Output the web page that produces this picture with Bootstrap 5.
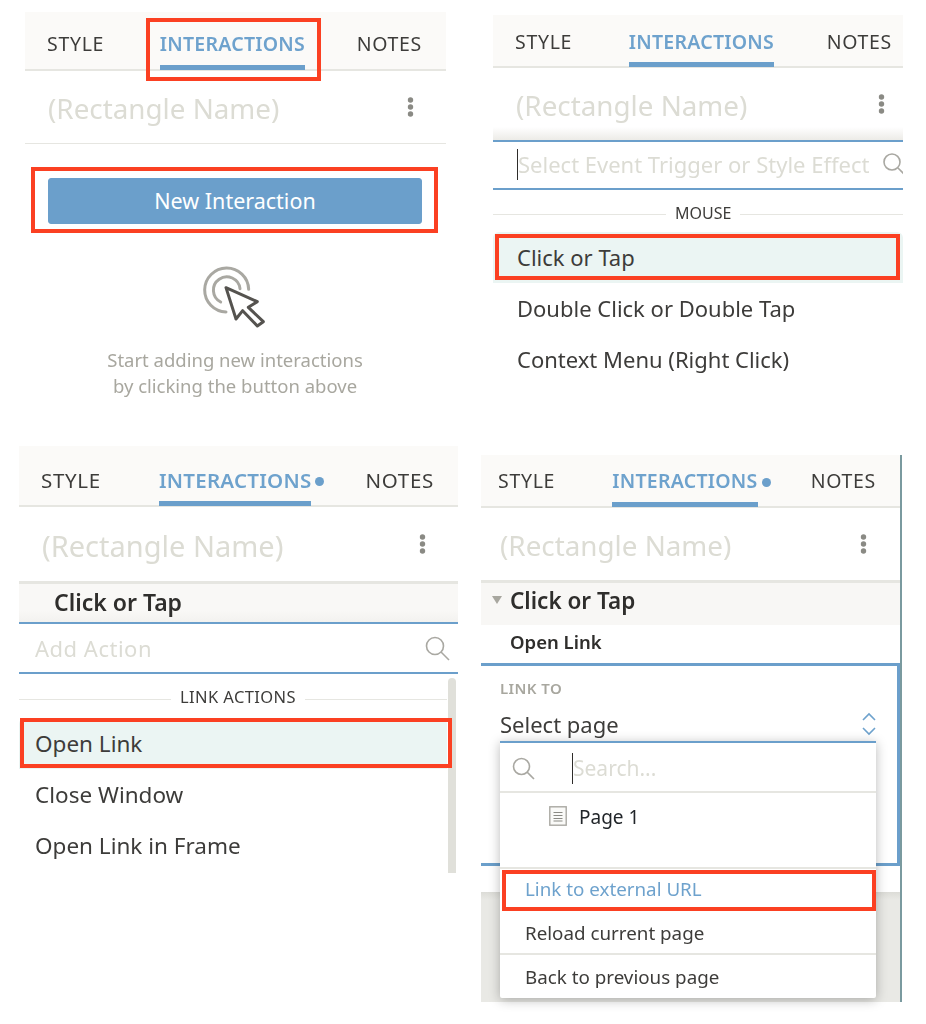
<!DOCTYPE html>
<html lang="en">
<head>
    <meta charset="UTF-8">
    <meta name="viewport" content="width=device-width, initial-scale=1, shrink-to-fit=no">
    <title>Interactions panel steps</title>
    <link href="https://cdn.jsdelivr.net/npm/bootstrap@5.3.0/dist/css/bootstrap.min.css" rel="stylesheet">
    <style>
        :root {
            --accent: #6b9fcb;
            --flag-red: #fb4022;
            --ink: #3d3c3a;
            --faint: #dcdcd4;
            --muted: #a8a79f;
            --hairline: #e6e6e1;
        }

        body {
            background: #fff;
            margin: 0;
            color: var(--ink);
            font-family: "Noto Sans", "Open Sans", sans-serif;
        }

        /* the source is a slightly soft photo of the app */
        .collage {
            display: grid;
            grid-template-columns: 463px 463px;
            grid-template-rows: 430px 594px;
            filter: blur(.35px);
        }

        .panel-a { margin: 12px 0 0 25px; width: 421px; }
        .panel-b { margin: 15px 0 0 30px; width: 410px; }
        .panel-c { margin: 16px 0 0 19px; width: 439px; height: 427px; }
        .panel-d { margin: 25px 0 0 18px; width: 421px; height: 547px; border-right: 2px solid #7a9a9f; position: relative; }

        /* tabs */
        .tab-strip {
            background: #fbfaf8;
            border-bottom: 2px solid var(--hairline);
            justify-content: space-between;
            flex-wrap: nowrap;
            align-items: flex-end;
        }
        .panel-a .tab-strip { height: 59px; padding: 0 24px 0 22px; }
        .panel-b .tab-strip { height: 53px; padding: 0 11px 0 22px; }
        .panel-c .tab-strip { height: 61px; padding: 0 24px 0 22px; }
        .panel-d .tab-strip { height: 53px; padding: 0 24px 0 17px; }

        .tab-strip .nav-link {
            padding: 0 0 9px;
            color: var(--ink);
            font-size: 19.5px;
            line-height: 24px;
            border-bottom: 5px solid transparent;
            margin-bottom: -1px;
            letter-spacing: .7px;
            position: relative;
        }
        .panel-b .tab-strip .nav-link { padding-bottom: 8px; }
        .panel-c .tab-strip .nav-link { font-size: 20.5px; }
        .tab-strip .nav-link.active {
            color: #6ea2cd;
            font-weight: 600;
            letter-spacing: .25px;
            border-bottom-color: var(--accent);
            margin-left: 4px;
        }
        .tab-dot {
            position: absolute;
            right: -13px;
            top: 9px;
            width: 9px;
            height: 9px;
            border-radius: 50%;
            background: var(--accent);
        }

        /* name row */
        .name-row {
            height: 72px;
            padding-left: 23px;
            padding-right: 32px;
            font-size: 27.8px;
            color: var(--faint);
        }
        .panel-a .name-row { height: 73px; border-bottom: 1px solid var(--hairline); padding-top: 4px; }
        .panel-b .name-row { background: linear-gradient(#fff 82%, #ecebe7); padding-right: 18px; padding-top: 4px; }
        .panel-c .name-row { height: 74px; padding-right: 32px; padding-top: 4px; font-size: 29px; }
        .panel-d .name-row { padding-right: 33px; padding-left: 19px; padding-top: 4px; }
        .more-dots { display: block; flex: none; margin-top: -5px; }

        /* new interaction */
        .cta-wrap { padding: 34px 24px 0 23px; }
        .cta-btn {
            height: 46px;
            background: var(--accent);
            border-color: var(--accent);
            color: #fff;
            font-size: 21.5px;
            line-height: 1;
            border-radius: 3px;
        }
        .cta-icon { display: block; margin: 26px auto 0; }
        .empty-note {
            margin-top: 7px;
            color: var(--muted);
            font-size: 18.5px;
            line-height: 26px;
            text-align: center;
        }

        /* search rows */
        .find-row {
            height: 50px;
            font-size: 22px;
            color: var(--faint);
            border-top: 2px solid var(--accent);
            border-bottom: 2px solid var(--accent);
            overflow: hidden;
            padding-bottom: 2px;
        }
        .panel-b .find-row { padding-left: 24px; }
        .panel-c .find-row { border-top: 0; padding: 0 8px 0 16px; letter-spacing: .5px; }
        .text-caret {
            display: block;
            flex: none;
            width: 1px;
            height: 31px;
            background: #2e2c2a;
        }
        .glass { display: block; flex: none; }
        .panel-b .glass { margin-right: -3px; }

        /* section label */
        .sect-label {
            font-size: 16px;
            height: 42px;
            gap: 9px;
            line-height: 1;
            padding-top: 3px;
        }
        .panel-c .sect-label { height: 44px; font-size: 16.5px; letter-spacing: .4px; padding-top: 2px; }
        .sect-label::before,
        .sect-label::after {
            content: "";
            flex: 1;
            height: 1px;
            margin-top: 4px;
            background: var(--hairline);
        }
        .panel-b .sect-label::before { flex: 0 0 173px; }
        .panel-c .sect-label::before { flex: 0 0 152px; }

        /* option rows */
        .pick-list .list-group-item {
            height: 51px;
            padding: 0 0 0 24px;
            border: 0;
            display: flex;
            align-items: center;
            font-size: 22px;
            color: var(--ink);
            background: transparent;
            position: relative;
        }
        .panel-c .pick-list .list-group-item { padding-left: 16px; font-size: 22.5px; }
        .pick-list .list-group-item.picked { background: #ebf5f3; }
        .scroll-thumb {
            flex: none;
            width: 8px;
            height: 195px;
            margin: 4px 2px 0 1px;
            background: #e0e0da;
            border-radius: 4px 4px 0 0;
        }
        .list-col { width: 428px; flex: none; }

        /* red callouts */
        .flag { position: relative; }
        .flag::after {
            content: "";
            position: absolute;
            border: 4px solid var(--flag-red);
            pointer-events: none;
            z-index: 5;
        }
        .flag-tab::after { top: -14px; left: -14px; right: -16px; bottom: -16px; }
        .flag-cta::after { top: -12px; left: -18px; right: -17px; bottom: -10px; }
        .flag-row::after { top: 2px; left: 2px; right: 3px; bottom: 3px; }
        .flag-row-c::after { top: 0; left: 1px; right: -5px; bottom: 1px; }
        .flag-ext::after { top: 1px; left: 2px; right: 0; bottom: 0; }

        /* trigger band */
        .trigger-band {
            height: 43px;
            border-top: 3px solid var(--hairline);
            background: linear-gradient(#f9f8f6 70%, #f3f2ef);
            font-size: 23px;
            font-weight: 600;
            color: #2f2e2c;
            padding-left: 35px;
            padding-bottom: 2px;
            border-bottom: 2px solid var(--accent);
        }
        .panel-d .trigger-band {
            height: 45px;
            background: #f8f7f5;
            border-bottom: 0;
            padding-left: 11px;
            gap: 8px;
            padding-bottom: 6px;
            font-size: 22.5px;
        }
        .fold-mark {
            width: 0;
            height: 0;
            border-left: 5px solid transparent;
            border-right: 5px solid transparent;
            border-top: 8px solid var(--muted);
            margin-top: -2px;
        }
        .action-row {
            height: 38px;
            padding-left: 29px;
            padding-bottom: 4px;
            font-size: 18.5px;
            font-weight: 600;
            color: #2f2e2c;
        }

        /* expanded action */
        .action-box {
            height: 203px;
            border-top: 3px solid var(--accent);
            border-right: 3px solid var(--accent);
            border-bottom: 3px solid var(--accent);
            padding: 13px 0 0 19px;
        }
        .field-label {
            font-size: 15px;
            font-weight: 600;
            color: var(--muted);
            line-height: 18px;
            letter-spacing: .4px;
        }
        .field-value {
            height: 40px;
            padding: 0 18px 0 0;
            font-size: 22px;
            margin-top: 7px;
            margin-right: 3px;
        }
        .foot-white { height: 26px; }
        .foot-gray {
            height: 110px;
            background: linear-gradient(#dcdcd7, #e9e9e5 8px);
        }

        /* page dropdown */
        .page-menu {
            position: absolute;
            left: 19px;
            top: 286px;
            width: 376px;
            height: 257px;
            padding: 0;
            margin: 0;
            border: 0;
            border-top: 2px solid var(--accent);
            border-radius: 0 0 2px 2px;
            background: #fff;
            box-shadow: 0 2px 12px rgba(0, 0, 0, .28);
            z-index: 3;
        }
        .menu-find {
            height: 50px;
            padding: 3px 0 0 12px;
            gap: 37px;
            font-size: 21px;
            color: var(--faint);
            border-bottom: 2px solid var(--hairline);
        }
        .menu-page {
            height: 74px;
            padding: 9px 0 0 49px;
            gap: 12px;
            font-size: 19px;
            align-items: flex-start;
            line-height: 30px;
        }
        .page-glyph { margin-top: 4px; }
        .page-menu .dropdown-item {
            height: 44px;
            padding: 0 0 0 25px;
            display: flex;
            align-items: center;
            font-size: 18.8px;
            color: var(--ink);
        }
        .page-menu .dropdown-item.first-ext {
            color: #6ea2cd;
            border-top: 2px solid var(--hairline);
            padding-bottom: 2px;
        }
        .page-menu .dropdown-item.split { border-bottom: 2px solid var(--hairline); padding-top: 2px; }
    </style>
</head>
<body>
    <div class="collage">

        <!-- step 1 -->
        <section class="panel-a">
            <nav class="nav tab-strip">
                <a class="nav-link" href="#">STYLE</a>
                <a class="nav-link active flag flag-tab" href="#">INTERACTIONS</a>
                <a class="nav-link" href="#">NOTES</a>
            </nav>
            <div class="name-row d-flex align-items-center justify-content-between">
                <span>(Rectangle Name)</span>
                <svg class="more-dots" width="7" height="20" viewBox="0 0 7 20"><g fill="#8a8a84"><circle cx="3.5" cy="3" r="2.7"/><circle cx="3.5" cy="10" r="2.7"/><circle cx="3.5" cy="17" r="2.7"/></g></svg>
            </div>
            <div class="cta-wrap">
                <button type="button" class="btn cta-btn w-100 flag flag-cta">New Interaction</button>
                <svg class="cta-icon" width="110" height="90" viewBox="0 0 330 270">
                    <g fill="none" stroke-linecap="round">
                        <path d="M206 118A66 66 0 1 0 138 186" stroke="#a9a8a2" stroke-width="9"/>
                        <path d="M180 116A40 40 0 1 0 122 156" stroke="#a9a8a2" stroke-width="9"/>
                    </g>
                    <path d="M138 113L232 155L205 172L250 215L232 228L188 182L168 207Z" fill="#fff" stroke="#55534f" stroke-width="9" stroke-linejoin="round"/>
                </svg>
                <p class="empty-note">Start adding new interactions<br>by clicking the button above</p>
            </div>
        </section>

        <!-- step 2 -->
        <section class="panel-b">
            <nav class="nav tab-strip">
                <a class="nav-link" href="#">STYLE</a>
                <a class="nav-link active" href="#">INTERACTIONS</a>
                <a class="nav-link" href="#">NOTES</a>
            </nav>
            <div class="name-row d-flex align-items-center justify-content-between">
                <span>(Rectangle Name)</span>
                <svg class="more-dots" width="7" height="20" viewBox="0 0 7 20"><g fill="#8a8a84"><circle cx="3.5" cy="3" r="2.7"/><circle cx="3.5" cy="10" r="2.7"/><circle cx="3.5" cy="17" r="2.7"/></g></svg>
            </div>
            <div class="find-row d-flex align-items-center justify-content-between">
                <span class="d-flex align-items-center text-nowrap"><i class="text-caret"></i>Select Event Trigger or Style Effect</span>
                <svg class="glass" width="24" height="24" viewBox="0 0 24 24"><g fill="none" stroke="#a9a8a2" stroke-width="1.6"><circle cx="10" cy="10" r="8"/><path d="M16 16l7 7"/></g></svg>
            </div>
            <div class="sect-label d-flex align-items-center">MOUSE</div>
            <div class="list-group pick-list">
                <a href="#" class="list-group-item picked flag flag-row">Click or Tap</a>
                <a href="#" class="list-group-item">Double Click or Double Tap</a>
                <a href="#" class="list-group-item">Context Menu (Right Click)</a>
            </div>
        </section>

        <!-- step 3 -->
        <section class="panel-c">
            <nav class="nav tab-strip">
                <a class="nav-link" href="#">STYLE</a>
                <a class="nav-link active" href="#">INTERACTIONS<i class="tab-dot"></i></a>
                <a class="nav-link" href="#">NOTES</a>
            </nav>
            <div class="name-row d-flex align-items-center justify-content-between">
                <span>(Rectangle Name)</span>
                <svg class="more-dots" width="7" height="20" viewBox="0 0 7 20"><g fill="#8a8a84"><circle cx="3.5" cy="3" r="2.7"/><circle cx="3.5" cy="10" r="2.7"/><circle cx="3.5" cy="17" r="2.7"/></g></svg>
            </div>
            <div class="trigger-band d-flex align-items-center">Click or Tap</div>
            <div class="find-row d-flex align-items-center justify-content-between">
                <span>Add Action</span>
                <svg class="glass" width="25" height="25" viewBox="0 0 25 25"><g fill="none" stroke="#a9a8a2" stroke-width="1.6"><circle cx="10" cy="10" r="8.5"/><path d="M16 16l8 8"/></g></svg>
            </div>
            <div class="d-flex">
                <div class="list-col">
                    <div class="sect-label d-flex align-items-center">LINK ACTIONS</div>
                    <div class="list-group pick-list">
                        <a href="#" class="list-group-item picked flag flag-row-c">Open Link</a>
                        <a href="#" class="list-group-item">Close Window</a>
                        <a href="#" class="list-group-item">Open Link in Frame</a>
                    </div>
                </div>
                <div class="scroll-thumb"></div>
            </div>
        </section>

        <!-- step 4 -->
        <section class="panel-d">
            <nav class="nav tab-strip">
                <a class="nav-link" href="#">STYLE</a>
                <a class="nav-link active" href="#">INTERACTIONS<i class="tab-dot"></i></a>
                <a class="nav-link" href="#">NOTES</a>
            </nav>
            <div class="name-row d-flex align-items-center justify-content-between">
                <span>(Rectangle Name)</span>
                <svg class="more-dots" width="7" height="20" viewBox="0 0 7 20"><g fill="#8a8a84"><circle cx="3.5" cy="3" r="2.7"/><circle cx="3.5" cy="10" r="2.7"/><circle cx="3.5" cy="17" r="2.7"/></g></svg>
            </div>
            <div class="trigger-band d-flex align-items-center"><i class="fold-mark"></i>Click or Tap</div>
            <div class="action-row d-flex align-items-center">Open Link</div>
            <div class="action-box">
                <div class="field-label">LINK TO</div>
                <div class="field-value d-flex align-items-center justify-content-between">
                    <span>Select page</span>
                    <svg width="14" height="24" viewBox="0 0 14 24"><g fill="none" stroke="#6ea2cd" stroke-width="1.6"><path d="M1 8l6-6 6 6"/><path d="M1 16l6 6 6-6"/></g></svg>
                </div>
            </div>
            <div class="foot-white"></div>
            <div class="foot-gray"></div>

            <div class="dropdown-menu show page-menu">
                <div class="menu-find d-flex align-items-center">
                    <svg class="glass" width="23" height="23" viewBox="0 0 23 23"><g fill="none" stroke="#a9a8a2" stroke-width="1.6"><circle cx="9.5" cy="9.5" r="8"/><path d="M15 15l7 7"/></g></svg>
                    <span class="d-flex align-items-center"><i class="text-caret"></i>Search...</span>
                </div>
                <div class="menu-page d-flex">
                    <svg class="page-glyph" width="18" height="20" viewBox="0 0 18 20"><rect x=".8" y=".8" width="16.4" height="18.4" fill="#fafaf8" stroke="#a9a8a2" stroke-width="1.4"/><path d="M4.500 6.500h9M4.500 9.500h9M4.500 12.500h9M4.500 15h9" stroke="#8a8a84" stroke-width="1"/></svg>
                    <span>Page 1</span>
                </div>
                <a href="#" class="dropdown-item first-ext flag flag-ext">Link to external URL</a>
                <a href="#" class="dropdown-item split">Reload current page</a>
                <a href="#" class="dropdown-item">Back to previous page</a>
            </div>
        </section>

    </div>
    <script src="https://cdn.jsdelivr.net/npm/bootstrap@5.3.0/dist/js/bootstrap.bundle.min.js"></script>
</body>
</html>
